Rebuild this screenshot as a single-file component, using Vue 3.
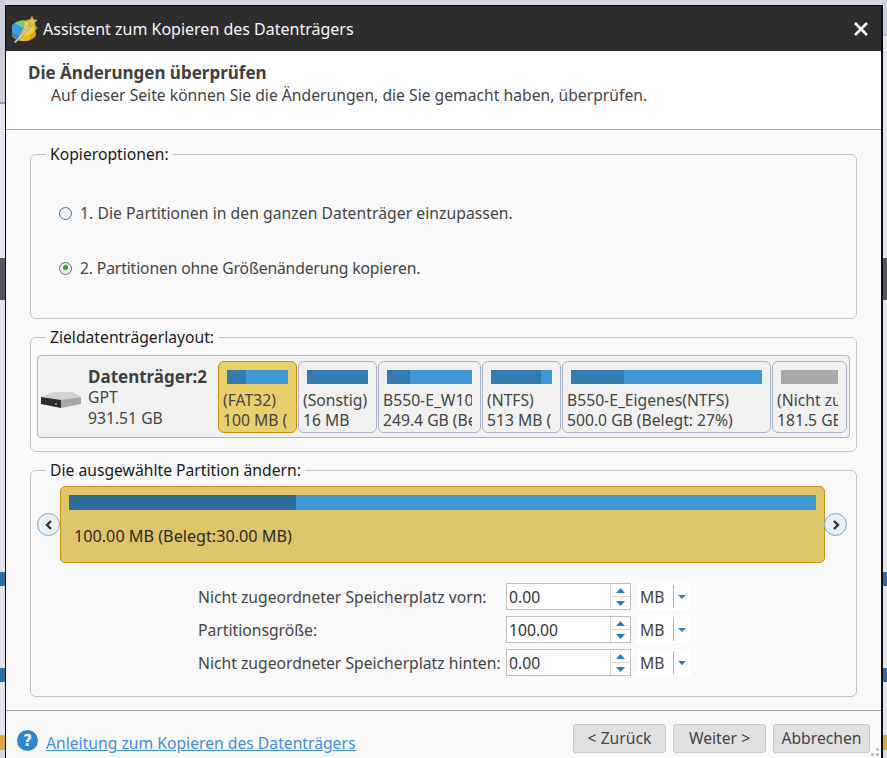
<script setup>
const parts = [
  { w: 79, sel: true, used: 31, color: '#3f97d3', a: '(FAT32)', b: '100 MB (B' },
  { w: 79, used: 100, color: '#3f97d3', a: '(Sonstig)', b: '16 MB' },
  { w: 103, used: 27, color: '#3f97d3', a: 'B550-E_W10', b: '249.4 GB (Be' },
  { w: 79, used: 82, color: '#3f97d3', a: '(NTFS)', b: '513 MB (B' },
  { w: 209, used: 27.7, color: '#3f97d3', a: 'B550-E_Eigenes(NTFS)', b: '500.0 GB (Belegt: 27%)' },
  { w: 75, used: 0, color: '#a9a9a9', a: '(Nicht zug', b: '181.5 GB' }
]
const rows = [
  { label: 'Nicht zugeordneter Speicherplatz vorn:', value: '0.00' },
  { label: 'Partitionsgröße:', value: '100.00' },
  { label: 'Nicht zugeordneter Speicherplatz hinten:', value: '0.00' }
]
const leftBands = 'linear-gradient(#cfcfe2 0 102px,#9b9bc0 102px 104px,#e6e6f0 104px 258px,#55555f 258px 300px,#e4e4ee 300px 572px,#2f6ea5 572px 586px,#e4e4ee 586px 668px,#2f6ea5 668px 682px,#e4e4ee 682px 735px,#d9a93f 735px 750px,#d8d8e4 750px)'
const rightBands = 'linear-gradient(#cfcfe2 0 34px,#b9b9d4 34px 36px,#e6e6f0 36px 258px,#55555f 258px 300px,#e4e4ee 300px 572px,#2f6ea5 572px 586px,#e4e4ee 586px 668px,#2f6ea5 668px 682px,#e4e4ee 682px 735px,#d9a93f 735px 750px,#d8d8e4 750px)'
</script>

<template>
  <div class="desk">
    <div class="strip left" :style="{ background: leftBands }"></div>
    <div class="win">
      <div class="titlebar">
        <svg class="appicon" width="30" height="30" viewBox="0 0 30 30">
          <ellipse cx="13" cy="20" rx="12" ry="7" fill="#d9a514" />
          <path d="M1 14v6c0 4 5 7 12 7 2 0 4 0 6-1V14z" fill="#e8bc1e" />
          <path d="M1 14v6c0 3 3 5 7 6V14z" fill="#2f86cf" />
          <ellipse cx="13" cy="14" rx="12" ry="7.5" fill="#f0cf3a" />
          <path d="M13 14 4 8.8C1.800 10 1 12 1 14c0 3 3 6 8 7z" fill="#3b9ae0" />
          <path d="M13 14 4 8.800C7 6.500 11 6.300 14 6.500z" fill="#7cc57b" />
          <path d="m3 28 16-17 1.500 1.300L4.500 29z" fill="#d9d9d9" stroke="#666" stroke-width=".5" />
          <path d="m21 2 1.700 3.600 3.800.4-2.800 2.700.8 3.800-3.500-1.900-3.400 2 .7-3.900-2.900-2.600 3.900-.5z" fill="#e3c34a" stroke="#9a8a3a" stroke-width=".5" />
          <circle cx="25" cy="14" r="1.500" fill="#6cb33f" />
        </svg>
        <span class="wintitle">Assistent zum Kopieren des Datenträgers</span>
        <svg class="close" width="16" height="16" viewBox="0 0 16 16">
          <path d="M2 2 14 14M14 2 2 14" stroke="#fff" stroke-width="2.600" fill="none" />
        </svg>
      </div>

      <div class="head">
        <div class="h1">Die Änderungen überprüfen</div>
        <div class="h2">Auf dieser Seite können Sie die Änderungen, die Sie gemacht haben, überprüfen.</div>
      </div>

      <div class="body">
        <section class="group g1">
          <div class="legend">Kopieroptionen:</div>
          <div class="radio r1">
            <span class="dot"></span>
            <span>1. Die Partitionen in den ganzen Datenträger einzupassen.</span>
          </div>
          <div class="radio r2">
            <span class="dot on"></span>
            <span>2. Partitionen ohne Größenänderung kopieren.</span>
          </div>
        </section>

        <section class="group g2">
          <div class="legend">Zieldatenträgerlayout:</div>
          <div class="disk">
            <div class="diskinfo">
              <svg width="42" height="18" viewBox="0 0 42 18">
                <path d="M1 6 13 1h19l9 5-20 3z" fill="#d2d2d2" />
                <path d="M1 6l20 3v8L1 13z" fill="#2a2a2a" />
                <path d="M21 9l20-3v7l-20 4z" fill="#a8a8a8" />
                <rect x="15" y="12" width="2" height="2" fill="#4caf50" />
              </svg>
              <div class="disktext">
                <b>Datenträger:2</b>
                <span>GPT</span>
                <span>931.51 GB</span>
              </div>
            </div>
            <div class="partlist">
              <div v-for="p in parts" :key="p.a" class="part" :class="{ sel: p.sel }" :style="{ width: p.w + 'px' }">
                <div class="bar" :style="{ background: p.color }">
                  <i :style="{ width: p.used + '%' }"></i>
                </div>
                <div class="ptext">{{ p.a }}</div>
                <div class="ptext">{{ p.b }}</div>
              </div>
            </div>
          </div>
        </section>

        <section class="group g3">
          <div class="legend">Die ausgewählte Partition ändern:</div>
          <div class="picker">
            <button class="nav" type="button">
              <svg width="12" height="12" viewBox="0 0 12 12"><path d="M8 2 4 6l4 4" fill="none" stroke="#333" stroke-width="2.400" /></svg>
            </button>
            <div class="bigpart">
              <div class="bigbar"><i></i></div>
              <div class="bigtext">100.00 MB (Belegt:30.00 MB)</div>
            </div>
            <button class="nav next" type="button">
              <svg width="12" height="12" viewBox="0 0 12 12"><path d="m4 2 4 4-4 4" fill="none" stroke="#333" stroke-width="2.400" /></svg>
            </button>
          </div>
          <div class="form">
            <div v-for="r in rows" :key="r.label" class="row">
              <span class="rlabel">{{ r.label }}</span>
              <div class="input">
                <span class="val">{{ r.value }}</span>
                <div class="spin">
                  <span><svg width="9" height="5" viewBox="0 0 9 5"><path d="M4.500 0 9 5H0z" fill="#2b7cc4" /></svg></span>
                  <span><svg width="9" height="5" viewBox="0 0 9 5"><path d="M0 0h9L4.500 5z" fill="#2b7cc4" /></svg></span>
                </div>
              </div>
              <div class="unit">
                <span class="mb">MB</span>
                <span class="caret"><svg width="8" height="4" viewBox="0 0 8 4"><path d="M0 0h8L4 4z" fill="#2b7cc4" /></svg></span>
              </div>
            </div>
          </div>
        </section>
      </div>

      <div class="foot">
        <svg class="help" width="21" height="21" viewBox="0 0 21 21">
          <circle cx="10.500" cy="10.500" r="10.500" fill="#2f86cc" />
          <text x="10.500" y="16" text-anchor="middle" font-size="15" font-weight="700" fill="#fff" font-family="'DejaVu Sans',sans-serif">?</text>
        </svg>
        <a class="link">Anleitung zum Kopieren des Datenträgers</a>
        <div class="btns">
          <button class="btn b1" type="button">&lt; Zurück</button>
          <button class="btn b1" type="button">Weiter &gt;</button>
          <button class="btn b2" type="button">Abbrechen</button>
        </div>
        <svg class="grip" width="8" height="8" viewBox="0 0 8 8"><path d="M5 0h3v3H5zM0 5h3v3H0zM5 5h3v3H5z" fill="#c4c4c4" /></svg>
      </div>
    </div>
    <div class="strip right" :style="{ background: rightBands }"></div>
  </div>
</template>

<style scoped>
.desk {
  width: 887px;
  height: 758px;
  overflow: hidden;
  display: flex;
  background: #d6d6e6;
  font-family: "Noto Sans", sans-serif;
  font-size: 15.7px;
  color: #444;
}
.strip { height: 758px; flex: none; }
.left { width: 5px; }
.right { width: 4px; }
.win {
  width: 878px;
  flex: none;
  margin-top: 5px;
  height: 753px;
  box-sizing: border-box;
  border: solid #0c0c0c;
  border-width: 1px 2px 0 1px;
  background: #f9f9f9;
  display: flex;
  flex-direction: column;
}
.titlebar {
  height: 45px;
  flex: none;
  background: #2d2d2d;
  display: flex;
  align-items: center;
  padding: 0 12px 0 5px;
}
.appicon { margin-right: 2px; }
.wintitle { color: #f6f6f6; flex: 1; font-size: 16px; }
.head {
  height: 79px;
  flex: none;
  box-sizing: border-box;
  background: #fff;
  border-bottom: 1px solid #a2a2a2;
  padding: 12px 0 0 22px;
}
.h1 { font-weight: 700; font-size: 17px; line-height: 20px; color: #404040; }
.h2 { line-height: 24px; padding-left: 23px; }
.body {
  height: 581px;
  flex: none;
  box-sizing: border-box;
  padding: 24px 24px 0;
  border-bottom: 1px solid #a2a2a2;
  display: flex;
  flex-direction: column;
  gap: 18px;
}
.group {
  position: relative;
  border: 1px solid #c4c4c4;
  border-radius: 6px;
  flex: none;
}
.legend {
  position: absolute;
  top: -11px;
  left: 15px;
  padding: 0 4px;
  line-height: 20px;
  background: #f9f9f9;
  color: #1a1a1a;
}
.g1 { height: 165px; box-sizing: border-box; padding-top: 48px; display: flex; flex-direction: column; gap: 35px; }
.radio { display: flex; align-items: center; gap: 8px; padding-left: 28px; line-height: 20px; }
.r1 { letter-spacing: 0.05px; }
.r2 { letter-spacing: -0.14px; }
.dot {
  width: 13px;
  height: 13px;
  box-sizing: border-box;
  border-radius: 50%;
  border: 1.500px solid #4c6f92;
  background: #f0f0f0;
  position: relative;
}
.dot.on::after {
  content: "";
  position: absolute;
  left: 2.500px;
  top: 2.500px;
  width: 5px;
  height: 5px;
  border-radius: 50%;
  background: #2aa52a;
}
.g2 { height: 115px; box-sizing: border-box; padding: 17px 6px 0; }
.disk {
  height: 83px;
  box-sizing: border-box;
  border: 1px solid #a9b4cb;
  border-radius: 4px;
  background: #f1f1f1;
  display: flex;
  overflow: hidden;
}
.diskinfo { width: 180px; flex: none; display: flex; align-items: center; padding-left: 2px; box-sizing: border-box; gap: 6px; }
.diskinfo svg { margin-top: 6px; }
.disktext { display: flex; flex-direction: column; line-height: 21px; padding-top: 2px; }
.disktext b { color: #404040; font-size: 17px; }
.partlist { display: flex; padding-top: 5px; gap: 1px; }
.part {
  flex: none;
  height: 72px;
  box-sizing: border-box;
  border: 1px solid #a9b4cb;
  border-radius: 6px;
  padding: 8px 8px 0 4px;
  overflow: hidden;
}
.part.sel { background: #ead06c; border-color: #c98c0c; }
.bar { height: 14px; margin: 0 0 6px 4px; display: flex; }
.bar i { background: #367bad; display: block; }
.ptext { line-height: 20px; white-space: nowrap; overflow: hidden; }
.g3 { height: 227px; box-sizing: border-box; padding-top: 15px; }
.picker { display: flex; align-items: center; margin-left: 6px; width: 811px; }
.nav {
  width: 23px;
  height: 23px;
  flex: none;
  padding: 0;
  border-radius: 50%;
  border: 1.500px solid #7fa5c4;
  background: #e6f0f8;
  display: flex;
  align-items: center;
  justify-content: center;
  position: relative;
  z-index: 1;
}
.next { margin-left: -1px; }
.bigpart {
  width: 765px;
  height: 77px;
  flex: none;
  box-sizing: border-box;
  background: #dfc56a;
  border: 1px solid #cf8f0c;
  border-radius: 5px;
  padding: 8px;
}
.bigbar { height: 15px; background: #3f97d3; }
.bigbar i { display: block; height: 100%; width: 227px; background: #2e6c9a; }
.bigtext { margin: 16px 0 0 5px; line-height: 20px; color: #2a2a2a; font-size: 16.2px; }
.form { margin: 20px 0 0 167px; display: flex; flex-direction: column; gap: 6px; }
.row { display: flex; align-items: center; height: 27px; }
.rlabel { width: 308px; flex: none; white-space: nowrap; }
.input {
  width: 125px;
  height: 27px;
  box-sizing: border-box;
  border: 1px solid #bfbfbf;
  background: #fff;
  display: flex;
  align-items: center;
  justify-content: space-between;
  padding-left: 2px;
}
.val { color: #333; }
.spin { width: 19px; height: 25px; border-left: 1px solid #d8d8d8; display: flex; flex-direction: column; }
.spin span { flex: 1; display: flex; align-items: center; justify-content: center; }
.spin span:first-child { border-bottom: 1px solid #d8d8d8; }
.unit {
  width: 53px;
  height: 27px;
  margin-left: 6px;
  background: #fff;
  display: flex;
  align-items: center;
  box-sizing: border-box;
  padding-left: 3px;
}
.mb { width: 33px; flex: none; }
.caret {
  flex: 1;
  height: 23px;
  border-left: 1px solid #b5b5b5;
  display: flex;
  align-items: center;
  justify-content: center;
}
.foot {
  flex: 1;
  position: relative;
  display: flex;
  align-items: center;
  padding: 12px 0 0 11px;
}
.help { flex: none; margin-right: 8px; }
.link { color: #3f8fe0; text-decoration: underline; margin-top: 5px; }
.btns { display: flex; gap: 7px; position: absolute; right: 11px; top: 13px; }
.btn {
  height: 29px;
  padding: 0 0 2px;
  box-sizing: border-box;
  border: 1px solid #cbcbcb;
  border-radius: 3px;
  background: #e1e1e1;
  color: #444;
  font: inherit;
}
.b1 { width: 93px; }
.b2 { width: 97px; }
.grip { position: absolute; right: 2px; bottom: 2px; }
</style>

<style>
html, body { margin: 0; padding: 0; overflow: hidden; }
</style>
